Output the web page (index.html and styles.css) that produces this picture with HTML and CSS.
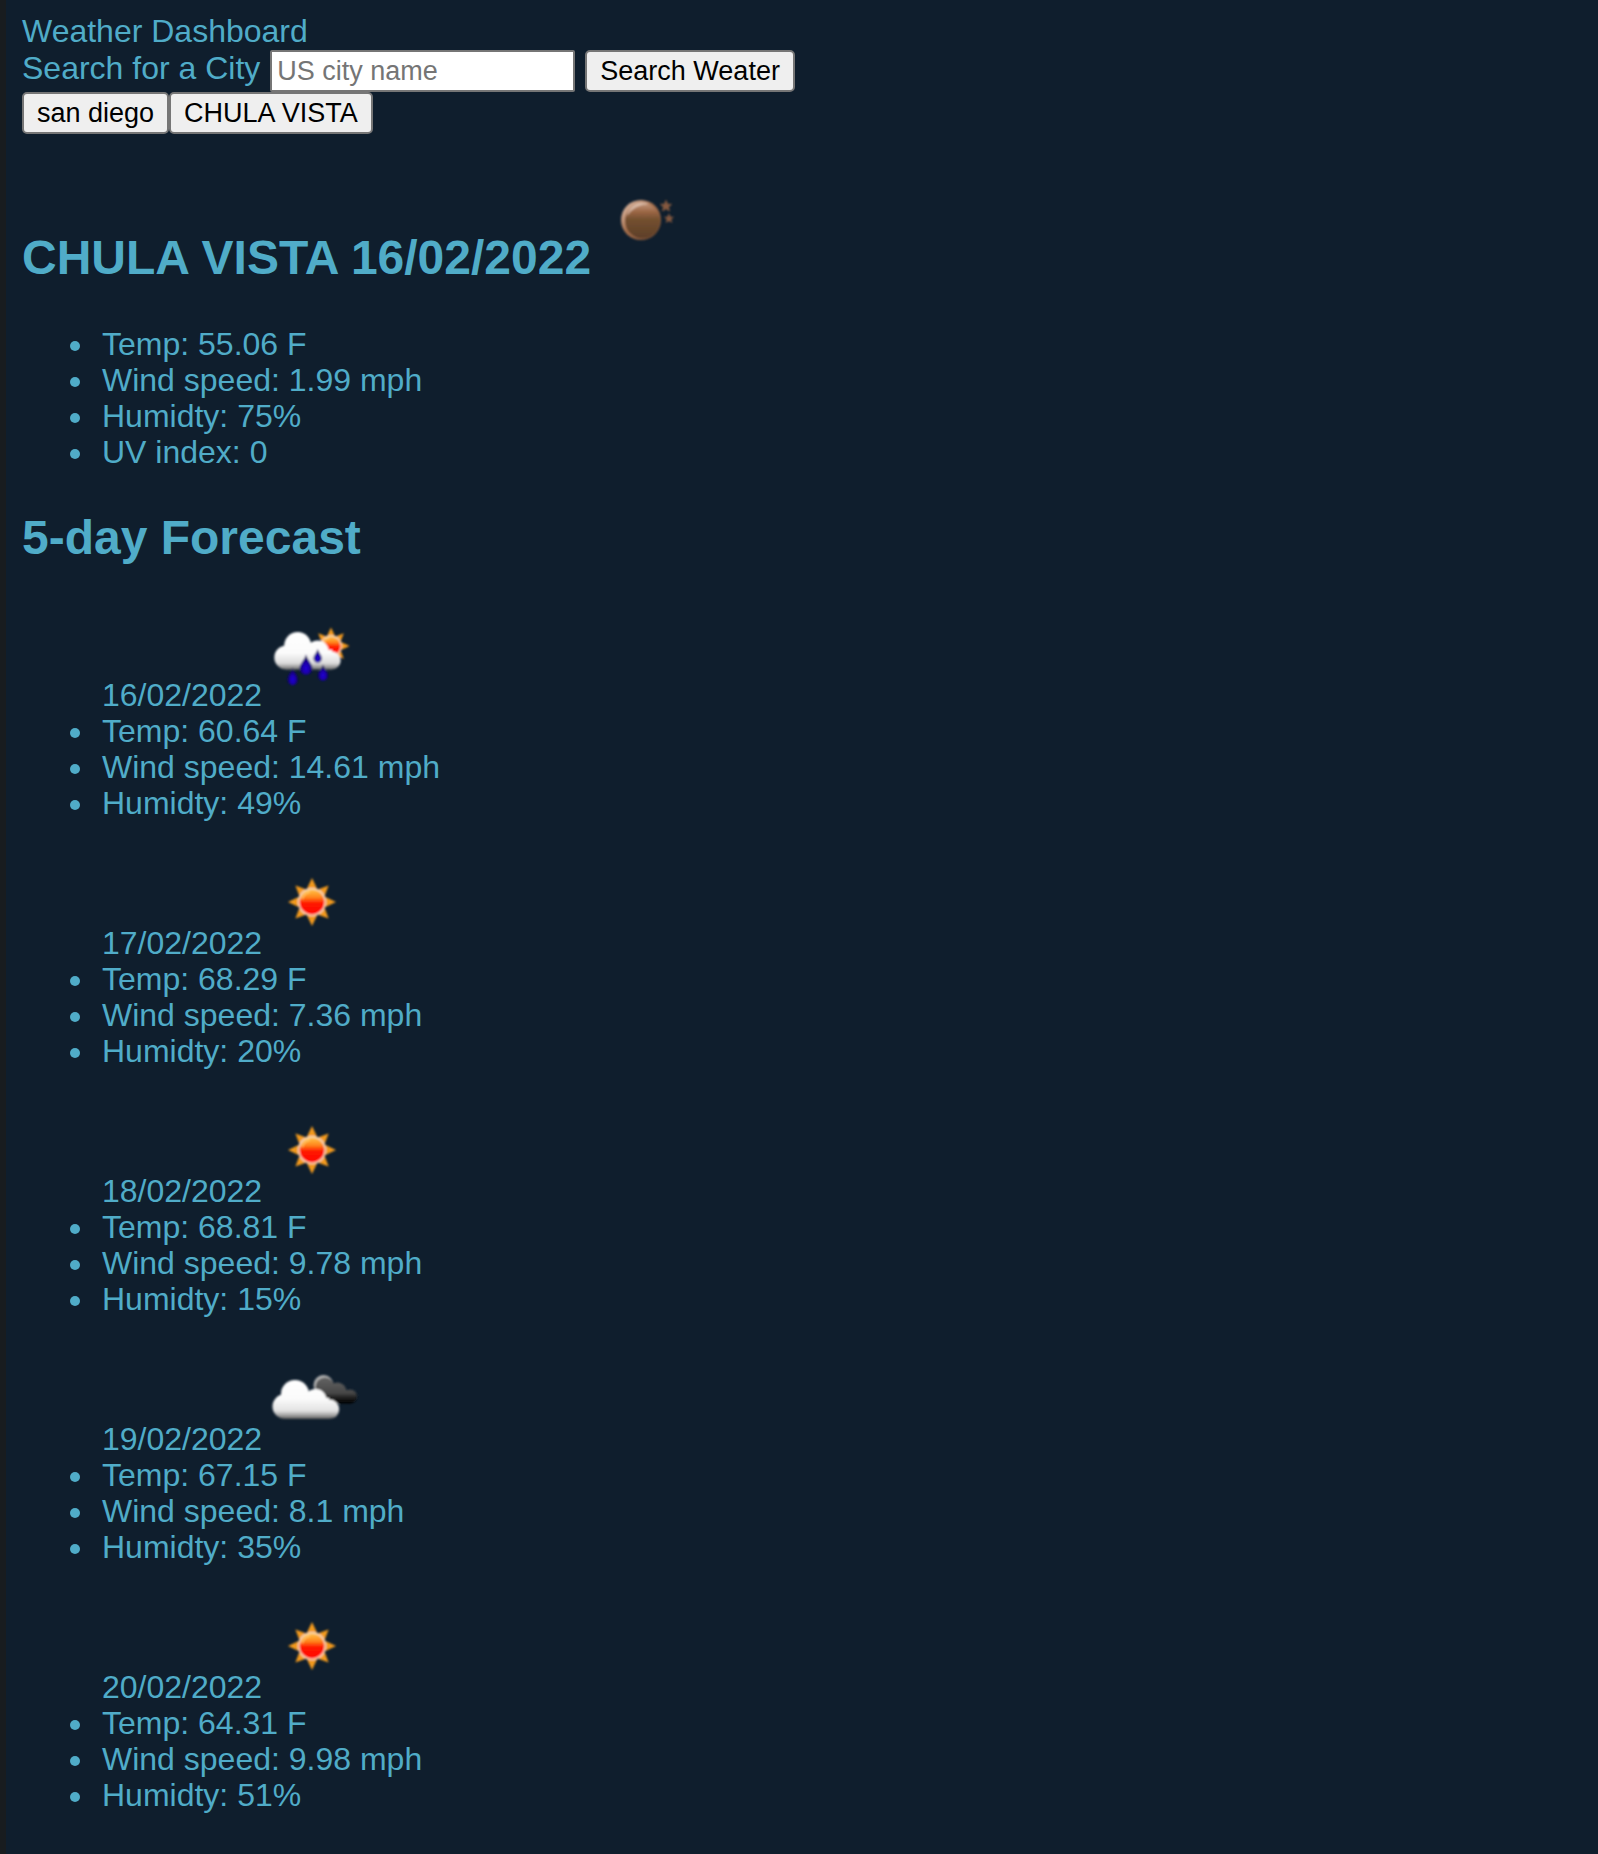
FILE: index.html
```html
<!DOCTYPE html>
<html lang="en">
<head>
<meta charset="utf-8">
<title>Weather Dashboard</title>
<link rel="stylesheet" href="styles.css">
</head>
<body>
<svg class="defs" aria-hidden="true">
  <defs>
    <filter id="soft" x="-10%" y="-10%" width="120%" height="120%"><feGaussianBlur stdDeviation="0.8"/></filter>
    <linearGradient id="sunFill" x1="0" y1="0" x2="0" y2="1">
      <stop offset="0" stop-color="#ffc24a"/><stop offset=".3" stop-color="#ff8a1c"/>
      <stop offset=".55" stop-color="#ff1a00"/><stop offset="1" stop-color="#ff0000"/>
    </linearGradient>
    <linearGradient id="whiteCloud" gradientUnits="userSpaceOnUse" x1="0" y1="28" x2="0" y2="69">
      <stop offset="0" stop-color="#fff"/><stop offset=".5" stop-color="#fbfbfb"/>
      <stop offset=".8" stop-color="#e2e2e2"/><stop offset=".92" stop-color="#9a9a9a"/><stop offset="1" stop-color="#555"/>
    </linearGradient>
    <linearGradient id="rainCloud" gradientUnits="userSpaceOnUse" x1="0" y1="26" x2="0" y2="64">
      <stop offset="0" stop-color="#fff"/><stop offset=".55" stop-color="#fbfbfb"/>
      <stop offset=".82" stop-color="#dcdcdc"/><stop offset="1" stop-color="#666"/>
    </linearGradient>
    <linearGradient id="darkCloud" gradientUnits="userSpaceOnUse" x1="0" y1="26" x2="0" y2="54">
      <stop offset="0" stop-color="#666"/><stop offset=".6" stop-color="#484848"/>
      <stop offset=".85" stop-color="#111"/><stop offset="1" stop-color="#000"/>
    </linearGradient>
    <linearGradient id="moonFill" x1="0" y1="0" x2="0" y2="1">
      <stop offset="0" stop-color="#c09478"/><stop offset=".25" stop-color="#996443"/>
      <stop offset=".45" stop-color="#74502f"/><stop offset="1" stop-color="#5d3e29"/>
    </linearGradient>
    <linearGradient id="moonRim" x1="0" y1="0" x2="1" y2="1">
      <stop offset="0" stop-color="#e6c8b6"/><stop offset=".45" stop-color="#a8704c"/><stop offset="1" stop-color="#6f4830"/>
    </linearGradient>
    <radialGradient id="dropFill" cx=".5" cy=".68" r=".5">
      <stop offset="0" stop-color="#2200d8"/><stop offset=".55" stop-color="#1a00a8"/><stop offset="1" stop-color="#0c0058"/>
    </radialGradient>
    <path id="drop" d="M0-10C1-5 6-1 6 4A6 6 0 0 1-6 4C-6-1-1-5 0-10Z" fill="url(#dropFill)"/>
    <path id="star" d="M0-5.5 1.5-1.8 5.4-1.6 2.4 1 3.4 4.8 0 2.7-3.4 4.8-2.4 1-5.4-1.6-1.5-1.8Z" fill="#85593f" stroke="#85593f"/>
    <g id="sunShape">
      <path fill="#f39a1c" d="M0-24 5.5-12.5 16.6-16.6 12.5-5.5 24 0 12.5 5.5 16.6 16.6 5.5 12.5 0 24-5.500 12.500-16.600 16.600-12.500 5.500-24 0-12.500-5.500-16.600-16.600-5.500-12.500Z"/>
      <circle r="14" fill="#f6dcc4"/>
      <circle r="12.500" fill="url(#sunFill)"/>
      <path d="M-10-3A11 11 0 0 1-2-10.500" fill="none" stroke="#ffd070" stroke-width="2" opacity=".7"/>
    </g>
    <symbol id="clear" viewBox="0 1 100 100"><use href="#sunShape" x="50" y="49" filter="url(#soft)"/></symbol>
    <symbol id="rain" viewBox="0 0 100 100">
      <g filter="url(#soft)">
        <use href="#sunShape" transform="translate(69 40) scale(.77)"/>
        <g fill="url(#rainCloud)">
          <circle cx="35.700" cy="39.500" r="13.500"/>
          <circle cx="24.300" cy="51.500" r="12"/>
          <circle cx="55.700" cy="45.500" r="11"/>
          <circle cx="69.700" cy="54.500" r="9"/>
          <rect x="24" y="44" width="46" height="19.500"/>
        </g>
        <use href="#drop" transform="translate(30.700 70.200) scale(.87 .9)"/>
        <use href="#drop" transform="translate(44 58.500) scale(1.080 1.030)"/>
        <use href="#drop" transform="translate(55.700 49.800) scale(.7)"/>
        <use href="#drop" transform="translate(61 66.500) scale(.87 .82)"/>
      </g>
    </symbol>
    <symbol id="clouds" viewBox="0 0 100 100">
      <g filter="url(#soft)">
        <circle cx="61.500" cy="35" r="10" fill="#b0b0b0"/>
        <g fill="url(#darkCloud)">
          <circle cx="63" cy="37" r="9.500"/>
          <circle cx="75.500" cy="41.500" r="9"/>
          <circle cx="88" cy="46.500" r="7"/>
          <rect x="56" y="40" width="32" height="13.500"/>
        </g>
        <g fill="url(#whiteCloud)">
          <circle cx="33" cy="44" r="14"/>
          <circle cx="23" cy="56.500" r="12.500"/>
          <circle cx="53.500" cy="50" r="11"/>
          <circle cx="67.500" cy="59.300" r="9.700"/>
          <rect x="23" y="48" width="44" height="21"/>
        </g>
      </g>
    </symbol>
    <symbol id="night" viewBox="0 1 100 100">
      <g filter="url(#soft)">
        <circle cx="50" cy="47" r="20" fill="url(#moonRim)"/>
        <circle cx="51.500" cy="48" r="17.500" fill="url(#moonFill)"/>
        <path d="M36 43A16 16 0 0 1 58 31Q44 31 36 43Z" fill="#efdccf" opacity=".6"/>
        <use href="#star" x="75" y="33"/>
        <use href="#star" transform="translate(78 45.500) scale(.8)"/>
      </g>
    </symbol>
  </defs>
</svg>

<header>Weather Dashboard</header>
<main>
  <form class="search">
    <label for="city">Search for a City</label>
    <input id="city" class="control city" type="text" placeholder="US city name">
    <button class="control" type="button">Search Weater</button>
  </form>
  <nav class="history"><button class="control" type="button">san diego</button><button class="control" type="button">CHULA VISTA</button></nav>

  <section>
    <h2>CHULA VISTA 16/02/2022<svg class="icon" role="img" aria-label="Clear night"><use href="#night"/></svg></h2>
    <ul>
      <li>Temp: 55.06 F</li>
      <li>Wind speed: 1.99 mph</li>
      <li>Humidty: 75%</li>
      <li>UV index: 0</li>
    </ul>
  </section>

  <section>
    <h2>5-day Forecast</h2>
    <ul>
      <li class="date">16/02/2022<svg class="icon" role="img" aria-label="Rain"><use href="#rain"/></svg></li>
      <li>Temp: 60.64 F</li>
      <li>Wind speed: 14.61 mph</li>
      <li>Humidty: 49%</li>
    </ul>
    <ul>
      <li class="date">17/02/2022<svg class="icon" role="img" aria-label="Clear sky"><use href="#clear"/></svg></li>
      <li>Temp: 68.29 F</li>
      <li>Wind speed: 7.36 mph</li>
      <li>Humidty: 20%</li>
    </ul>
    <ul>
      <li class="date">18/02/2022<svg class="icon" role="img" aria-label="Clear sky"><use href="#clear"/></svg></li>
      <li>Temp: 68.81 F</li>
      <li>Wind speed: 9.78 mph</li>
      <li>Humidty: 15%</li>
    </ul>
    <ul>
      <li class="date">19/02/2022<svg class="icon" role="img" aria-label="Broken clouds"><use href="#clouds"/></svg></li>
      <li>Temp: 67.15 F</li>
      <li>Wind speed: 8.1 mph</li>
      <li>Humidty: 35%</li>
    </ul>
    <ul>
      <li class="date">20/02/2022<svg class="icon" role="img" aria-label="Clear sky"><use href="#clear"/></svg></li>
      <li>Temp: 64.31 F</li>
      <li>Wind speed: 9.98 mph</li>
      <li>Humidty: 51%</li>
    </ul>
  </section>
</main>
</body>
</html>
```
FILE: styles.css
```css
* {
  box-sizing: border-box;
}

html {
  background: #0f1e2d;
}

body {
  min-height: 100vh;
  margin: 0;
  padding: 13px 16px 0;
  border-left: 6px solid #181c1f;
  color: #50acc8;
  font: 32px/36px "Liberation Sans", Arial, Helvetica, sans-serif;
}

.defs {
  position: absolute;
  width: 0;
  height: 0;
}

.search {
  display: flex;
  flex-wrap: wrap;
  column-gap: 10px;
  margin-top: 1px;
}

.history {
  display: flex;
}

.control {
  height: 42px;
  margin: 0;
  padding: 0 13px;
  border: 2px solid #767676;
  border-radius: 5px;
  background: #efefef;
  color: #000;
  font: 27px/36px "Liberation Sans", Arial, Helvetica, sans-serif;
}

.city {
  width: 305px;
  padding: 0 5px;
  border-radius: 2px;
  background: #fff;
}

.city::placeholder {
  color: #757575;
  opacity: 1;
}

h2 {
  margin: 40px 0;
  font-size: 48px;
  line-height: 56px;
}

ul {
  margin: 33px 0;
  padding-left: 74px;
}

li {
  padding-left: 6px;
}

.date {
  list-style: none;
}

.icon {
  width: 100px;
  height: 100px;
  vertical-align: baseline;
}
```
